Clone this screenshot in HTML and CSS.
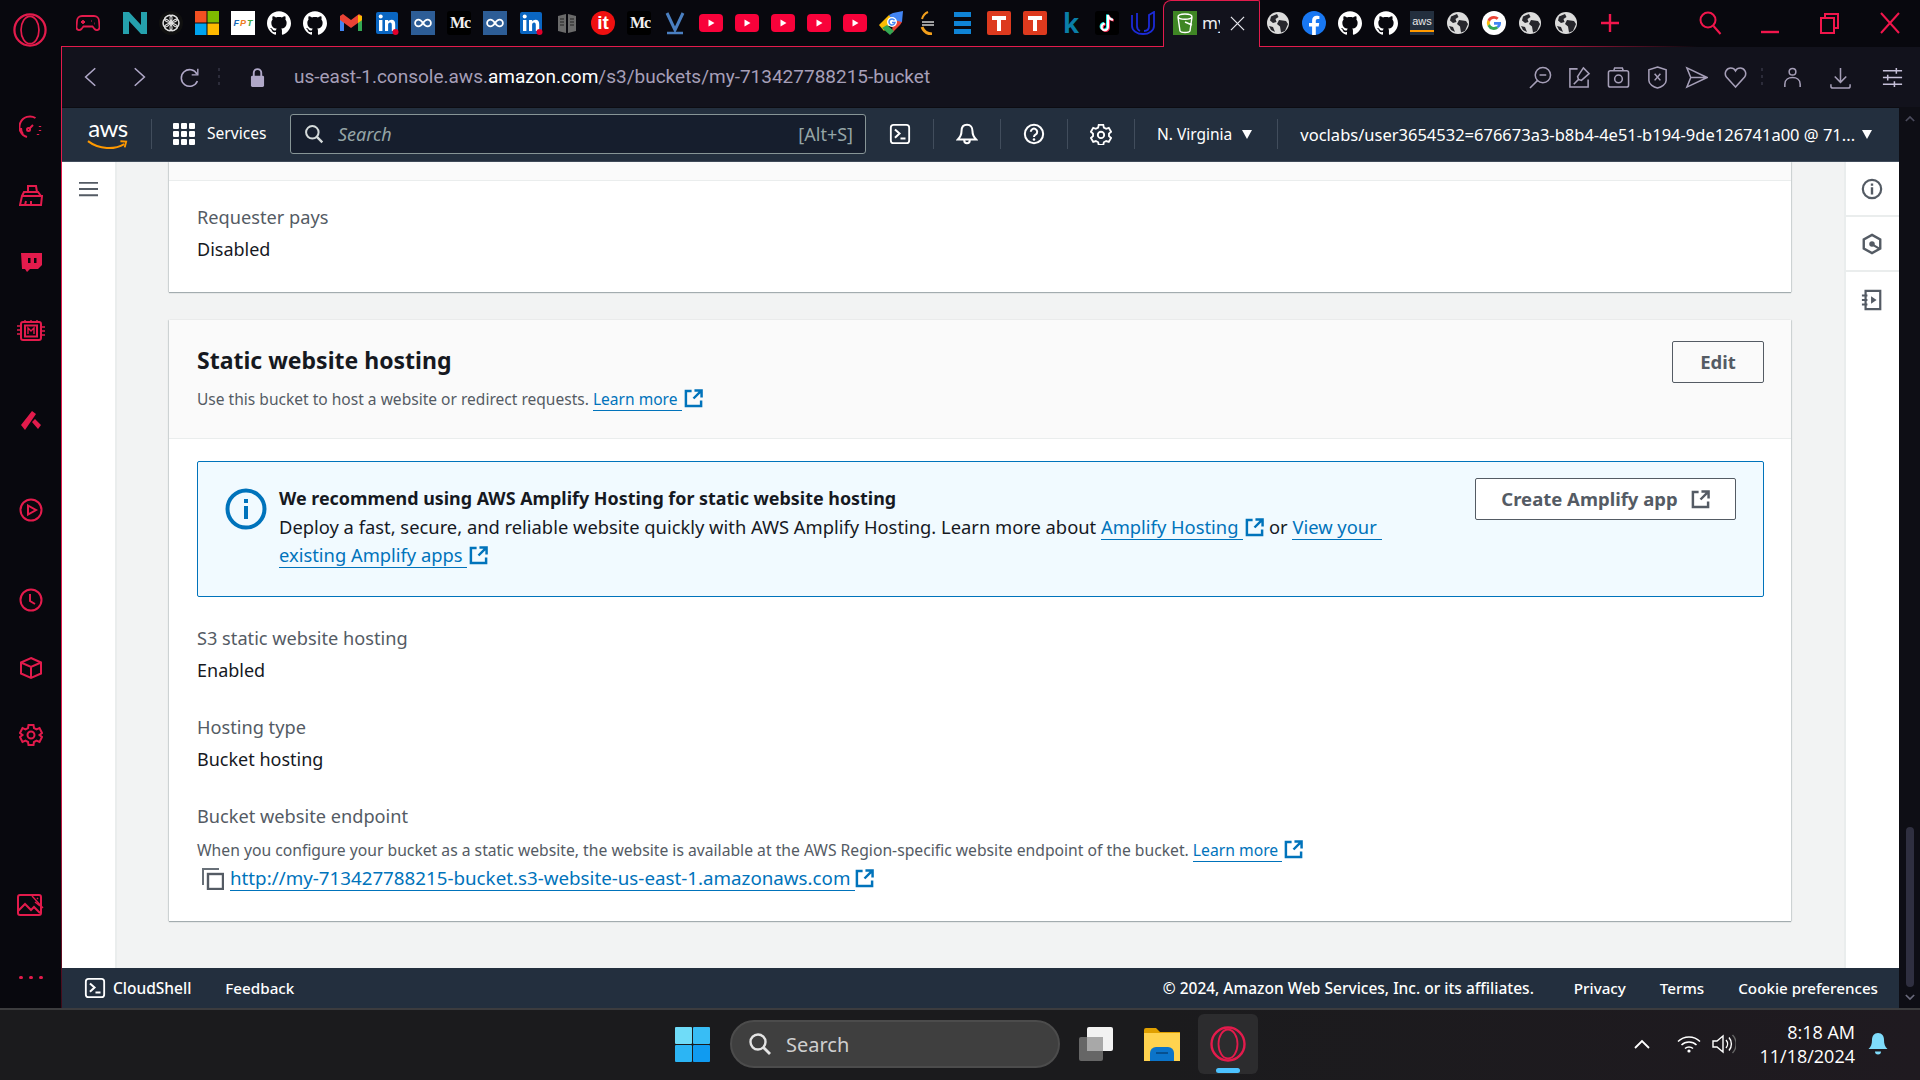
FILE: index.html
```html
<!DOCTYPE html>
<html lang="en">
<head>
<meta charset="utf-8">
<title>my-713427788215-bucket</title>
<link rel="stylesheet" href="styles.css">
</head>
<body>
<svg class="defs" aria-hidden="true">
  <defs>
    <symbol id="gh" viewBox="0 0 24 24"><path fill="#fff" d="M12 .297c-6.63 0-12 5.373-12 12 0 5.303 3.438 9.8 8.205 11.385.6.113.82-.258.82-.577 0-.285-.01-1.04-.015-2.04-3.338.724-4.042-1.61-4.042-1.61C4.422 18.07 3.633 17.7 3.633 17.7c-1.087-.744.084-.729.084-.729 1.205.084 1.838 1.236 1.838 1.236 1.07 1.835 2.809 1.305 3.495.998.108-.776.417-1.305.76-1.605-2.665-.3-5.466-1.332-5.466-5.93 0-1.31.465-2.38 1.235-3.22-.135-.303-.54-1.523.105-3.176 0 0 1.005-.322 3.3 1.23.96-.267 1.98-.399 3-.405 1.02.006 2.04.138 3 .405 2.28-1.552 3.285-1.23 3.285-1.23.645 1.653.24 2.873.12 3.176.765.84 1.23 1.91 1.23 3.22 0 4.61-2.805 5.625-5.475 5.92.42.36.81 1.096.81 2.22 0 1.606-.015 2.896-.015 3.286 0 .315.21.69.825.57C20.565 22.092 24 17.592 24 12.297c0-6.627-5.373-12-12-12"/></symbol>
    <symbol id="yt" viewBox="0 0 24 24"><rect x="0" y="3" width="24" height="18" rx="4" fill="#f8023a"/><path d="M9.5 8.5l6 3.5-6 3.5z" fill="#fff"/></symbol>
    <symbol id="li" viewBox="0 0 24 24"><rect x="1" y="1" width="22" height="22" rx="2" fill="#0a66c2"/><rect x="4" y="9" width="3.4" height="11" fill="#fff"/><circle cx="5.7" cy="5.6" r="2" fill="#fff"/><path d="M10 9h3.2v1.6c.7-1.2 1.9-1.9 3.3-1.9 2.7 0 3.7 1.7 3.7 4.5V20h-3.4v-6c0-1.5-.4-2.4-1.7-2.4s-2 1-2 2.4v6H10z" fill="#fff"/><circle cx="20.5" cy="21" r="3" fill="#e3002b"/></symbol>
    <symbol id="co" viewBox="0 0 24 24"><rect width="24" height="24" fill="#2d5d96"/><path d="M12 12c-1.6-2.4-2.8-3.4-4.5-3.4a3.4 3.4 0 0 0 0 6.8c1.7 0 2.9-1 4.5-3.4s2.8-3.4 4.5-3.4a3.4 3.4 0 0 1 0 6.8c-1.7 0-2.9-1-4.5-3.4z" fill="none" stroke="#fff" stroke-width="1.8"/></symbol>
    <symbol id="globe" viewBox="0 0 24 24"><circle cx="12" cy="12" r="11" fill="#dcdcdc"/><path d="M5 5.5l6-2.5 1.500 3-3 2 1 3-3.500 1-3-2.500zM13 9l7 1 2 3-3 7-4 1.500-1-6-3-2.500zM3 15l4 1 2 5-4-2z" fill="#26262c"/></symbol>
    <symbol id="t" viewBox="0 0 24 24"><rect width="24" height="24" rx="2" fill="#dd3a1e"/><path d="M5 5h14v4h-5v11h-4V9H5z" fill="#fff"/></symbol>
    <symbol id="ext" viewBox="0 0 20 20"><path d="M8 2H2v16h16v-6" fill="none" stroke="currentColor" stroke-width="2.6"/><path d="M11 1.500h7.500V9M18 2l-8 8" fill="none" stroke="currentColor" stroke-width="2.6"/></symbol>
    <symbol id="opera" viewBox="0 0 36 36"><circle cx="18" cy="18" r="16.500" fill="none" stroke="currentColor" stroke-width="2.4"/><ellipse cx="18" cy="18" rx="9.500" ry="14.500" fill="none" stroke="currentColor" stroke-width="1.800"/></symbol>
    <symbol id="term" viewBox="0 0 24 24"><rect x="2" y="2" width="20" height="20" rx="3" fill="none" stroke="currentColor" stroke-width="2"/><path d="M6.500 7l5 4.500-5 4.500M12.500 17h5.500" fill="none" stroke="currentColor" stroke-width="2.200"/></symbol>
    <symbol id="search" viewBox="0 0 24 24"><circle cx="10" cy="10" r="7.500" fill="none" stroke="currentColor" stroke-width="2.400"/><path d="M15.500 15.500L22 22" stroke="currentColor" stroke-width="2.800"/></symbol>
  </defs>
</svg>

<div class="window">
  <aside class="sidebar">
    <svg class="side-logo"><use href="#opera"/></svg>
    <div class="side-list">
      <span class="side-slot s1"><svg viewBox="0 0 24 24" class="side-ic"><path d="M16.500 3A10.500 10.500 0 1 0 8 22M4 19a10 10 0 0 1-2-6"/><path d="M10 14l4-4"/><circle cx="9.500" cy="14.500" r="1.500"/><path d="M21 11v1M21 15v1M19 19v1" stroke-width="2.400"/></svg></span>
      <span class="side-slot s2"><svg viewBox="0 0 24 24" class="side-ic"><path d="M3 12h20l-1 9H1zM3 12l2-4h14l3 4M9 8V2h8l1 6M7 17l-1 4M12 17v4"/></svg></span>
      <span class="side-slot s3"><svg viewBox="0 0 24 24" class="side-ic"><path class="fill" fill-rule="evenodd" d="M2 3h21v12l-4 4h-8l-3 3-2-3H3zm7 5v5h2.500V8zm6 0v5h2.500V8z"/></svg></span>
      <span class="side-slot s4"><svg viewBox="0 0 32 24" class="side-ic wide"><rect x="6" y="3" width="20" height="18" rx="2"/><rect x="10" y="6.500" width="12" height="11"/><path d="M13 15V9l3 3 3-3v6M2 7h4M2 11h4M2 15h4M26 8h4M26 12h4M26 16h4M10 1v2M16 1v2M22 1v2" stroke-width="1.400"/></svg></span>
      <span class="side-slot s5"><svg viewBox="0 0 24 24" class="side-ic"><path class="fill" d="M2 17L13 3l4 3L6 22zM13 14l3-3 6 6-3 4z"/></svg></span>
      <span class="side-slot s6"><svg viewBox="0 0 24 24" class="side-ic"><circle cx="12" cy="12" r="10.500"/><path d="M9 7.500l8 4.500-8 4.500z"/></svg></span>
      <span class="side-slot s7"><svg viewBox="0 0 24 24" class="side-ic"><circle cx="12" cy="12" r="10.500"/><path d="M11 6v7l5 3"/></svg></span>
      <span class="side-slot s8"><svg viewBox="0 0 24 24" class="side-ic"><path d="M12 2l10 4.500v11L12 22 2 17.500v-11zM2 6.500L12 11l10-4.500M12 11v11"/></svg></span>
      <span class="side-slot s9"><svg viewBox="0 0 24 24" class="side-ic"><path d="M9.500 2h5l.5 3 2.500 1.300L20.500 5 23 10l-2.500 2 2.500 2-2.500 5-3-1.300L15 19l-.5 3h-5L9 19l-2.500-1.300-3 1.300L1 14l2.500-2L1 10l2.500-5 3 1.300L9 5z"/><circle cx="12" cy="12" r="3.500"/></svg></span>
      <span class="side-slot s10"><svg viewBox="0 0 28 24" class="side-ic img"><rect x="1" y="2" width="23" height="20" rx="2"/><path d="M1 18l7-7 6 6 3-3 6 6"/><path d="M15 3l11 12M20 5l1 1M18 9l5 4" stroke-width="1.400"/></svg></span>
      <span class="side-slot s11"><span class="dot"></span><span class="dot"></span><span class="dot"></span></span>
    </div>
  </aside>

  <div class="main">
    <div class="tabstrip">
      <svg class="tb first" viewBox="0 0 24 24"><path d="M6 5h12a5 5 0 0 1 5 5l.5 6c.2 3-3 4-5 2l-2-2.500H7.500L5.500 18c-2 2-5.200 1-5-2L1 10a5 5 0 0 1 5-5zM5 11h4M7 9v4M15 10h.5M18 12.500h.5" fill="none" stroke="#e31b4c" stroke-width="1.800"/></svg>
      <svg class="tb" viewBox="0 0 24 24"><path d="M0 1h6l12 13V1h6v22h-6L6 10v13H0z" fill="#25a1ad"/></svg>
      <svg class="tb" viewBox="0 0 24 24"><circle cx="12" cy="12" r="12" fill="#101010"/><g fill="none" stroke="#e0e0e0" stroke-width="1.100"><ellipse cx="12" cy="8" rx="6.500" ry="3.600"/><ellipse cx="12" cy="8" rx="6.500" ry="3.600" transform="rotate(60 12 12)"/><ellipse cx="12" cy="8" rx="6.500" ry="3.600" transform="rotate(120 12 12)"/><ellipse cx="12" cy="8" rx="6.500" ry="3.600" transform="rotate(180 12 12)"/><ellipse cx="12" cy="8" rx="6.500" ry="3.600" transform="rotate(240 12 12)"/><ellipse cx="12" cy="8" rx="6.500" ry="3.600" transform="rotate(300 12 12)"/></g></svg>
      <svg class="tb" viewBox="0 0 24 24"><rect width="11.500" height="11.500" fill="#f25022"/><rect x="12.500" width="11.500" height="11.500" fill="#7fba00"/><rect y="12.500" width="11.500" height="11.500" fill="#00a4ef"/><rect x="12.500" y="12.500" width="11.500" height="11.500" fill="#ffb900"/></svg>
      <span class="tb fpt"><span class="fpt-f">F</span><span class="fpt-p">P</span><span class="fpt-t">T</span></span>
      <svg class="tb"><use href="#gh"/></svg>
      <svg class="tb"><use href="#gh"/></svg>
      <svg class="tb" viewBox="0 0 24 24"><path d="M1 5v15h4V10z" fill="#4285f4"/><path d="M23 5v15h-4V10z" fill="#34a853"/><path d="M1 5l3-2 8 6 8-6 3 2v4l-11 8L1 9z" fill="#ea4335"/><path d="M19 4l4 1v4l-4 3z" fill="#fbbc04"/></svg>
      <svg class="tb"><use href="#li"/></svg>
      <svg class="tb"><use href="#co"/></svg>
      <span class="tb med">Mc</span>
      <svg class="tb"><use href="#co"/></svg>
      <svg class="tb"><use href="#li"/></svg>
      <svg class="tb" viewBox="0 0 24 24"><path d="M3 5l8-2v19l-8-2zM21 5l-8-2v19l8-2z" fill="#6a6a6a"/><path d="M5 8h4M5 11h4M5 14h4M15 8h4M15 11h4M15 14h4" stroke="#222" stroke-width="1"/></svg>
      <span class="tb itc">it</span>
      <span class="tb med">Mc</span>
      <svg class="tb" viewBox="0 0 24 24"><path d="M4 2l8 17 8-17" fill="none" stroke="#4a7fc1" stroke-width="3"/><path d="M4 22h16" stroke="#4a7fc1" stroke-width="2.500"/></svg>
      <svg class="tb"><use href="#yt"/></svg>
      <svg class="tb"><use href="#yt"/></svg>
      <svg class="tb"><use href="#yt"/></svg>
      <svg class="tb"><use href="#yt"/></svg>
      <svg class="tb"><use href="#yt"/></svg>
      <svg class="tb" viewBox="0 0 24 24"><path d="M0 14L10 4l5 5L5 20z" fill="#fbbc04"/><path d="M10 4l4-2 10-2-1 11-6 2z" fill="#4285f4"/><path d="M14 9l9 2-2 3-8 8z" fill="#ea4335"/><path d="M3 17l8 7 4-4-7-6z" fill="#34a853"/><circle cx="13" cy="11" r="5" fill="#fff"/><path d="M15.500 9.300A3 3 0 1 0 16 11.500h-3" fill="none" stroke="#4285f4" stroke-width="1.500"/></svg>
      <svg class="tb" viewBox="0 0 24 24"><path d="M13 1A11 11 0 0 0 7 8" fill="none" stroke="#f29f1c" stroke-width="2"/><path d="M7 16a11 11 0 0 0 10 7" fill="none" stroke="#f29f1c" stroke-width="3"/><path d="M7 11h12M7 14h12" stroke="#cfcfcf" stroke-width="1.500"/></svg>
      <svg class="tb" viewBox="0 0 24 24"><rect x="3" y="1" width="17" height="5" fill="#0f84d6"/><rect x="3" y="10" width="17" height="5" fill="#0f84d6"/><rect x="3" y="18" width="17" height="5" fill="#0f84d6"/></svg>
      <svg class="tb"><use href="#t"/></svg>
      <svg class="tb"><use href="#t"/></svg>
      <span class="tb kk">k</span>
      <svg class="tb" viewBox="0 0 24 24"><rect width="24" height="24" rx="3" fill="#000"/><path d="M13 4v12a3.200 3.200 0 1 1-3.200-3.200M13 4c.4 2.800 2.200 4.400 5 4.700" fill="none" stroke="#25f4ee" stroke-width="2.400" transform="translate(-.8 -.6)"/><path d="M13 4v12a3.200 3.200 0 1 1-3.200-3.200M13 4c.4 2.800 2.200 4.400 5 4.700" fill="none" stroke="#fe2c55" stroke-width="2.400" transform="translate(.8 .6)"/><path d="M13 4v12a3.200 3.200 0 1 1-3.200-3.200M13 4c.4 2.800 2.200 4.400 5 4.700" fill="none" stroke="#fff" stroke-width="2"/></svg>
      <svg class="tb" viewBox="0 0 24 24"><path d="M1 4v11a11 8 0 0 0 22 0V1l-5 3v11c0 3-2 5-5 5M6 2v13c0 2 1 4 3 5" fill="none" stroke="#1c2bd8" stroke-width="1.800"/></svg>

      <div class="tab">
        <svg class="tab-fav" viewBox="0 0 24 24"><rect width="24" height="24" fill="#3f8624"/><path d="M5 6c0-4 14-4 14 0l-2 14c-1 2-9 2-10 0zM5 6c1 3 13 3 14 0M12 11l7 3" fill="none" stroke="#fff" stroke-width="1.400"/></svg>
        <span class="tab-title">my-</span>
        <svg class="tab-close" viewBox="0 0 16 16"><path d="M1 1l14 14M15 1L1 15" stroke="#e8e8ee" stroke-width="1.300"/></svg>
      </div>

      <svg class="tb"><use href="#globe"/></svg>
      <svg class="tb" viewBox="0 0 24 24"><circle cx="12" cy="12" r="12" fill="#1877f2"/><path d="M16.700 15.500l.5-3.500h-3.400V9.800c0-1 .5-1.900 2-1.900h1.600V5s-1.400-.3-2.700-.3c-2.800 0-4.600 1.700-4.600 4.700V12H7v3.500h3.100V24h3.700v-8.500z" fill="#fff"/></svg>
      <svg class="tb"><use href="#gh"/></svg>
      <svg class="tb"><use href="#gh"/></svg>
      <span class="tb awsf">aws</span>
      <svg class="tb"><use href="#globe"/></svg>
      <svg class="tb" viewBox="0 0 24 24"><circle cx="12" cy="12" r="12" fill="#fff"/><path d="M12 5a7 7 0 0 1 4.700 1.800l-2 2A4.200 4.200 0 0 0 7.900 11L5.500 9A7 7 0 0 1 12 5z" fill="#ea4335"/><path d="M5.500 9l2.400 2a4.300 4.300 0 0 0 0 2.100l-2.400 2a7 7 0 0 1 0-6.100z" fill="#fbbc04"/><path d="M7.900 13.100a4.200 4.200 0 0 0 6.300 2.200l2.300 1.800A7 7 0 0 1 5.500 15z" fill="#34a853"/><path d="M19 11h-7v2.800h4a3.500 3.500 0 0 1-1.800 1.500l2.300 1.800A7 7 0 0 0 19 11z" fill="#4285f4"/></svg>
      <svg class="tb"><use href="#globe"/></svg>
      <svg class="tb"><use href="#globe"/></svg>
      <svg class="tb plus" viewBox="0 0 24 24"><path d="M12 3v18M3 12h18" stroke="#f1164c" stroke-width="2.400"/></svg>

      <div class="winctl">
        <span class="wc"><svg viewBox="0 0 24 24"><circle cx="10" cy="9" r="7.500"/><path d="M15.500 15l7 8"/></svg></span>
        <span class="wc"><svg viewBox="0 0 24 24"><path d="M3 21h18" stroke-width="2.400"/></svg></span>
        <span class="wc"><svg viewBox="0 0 24 24"><rect x="3" y="7" width="13" height="15"/><path d="M7 7V3h13v14h-4"/></svg></span>
        <span class="wc"><svg viewBox="0 0 24 24"><path d="M3 2l18 20M21 2L3 22"/></svg></span>
      </div>
    </div>

    <div class="frame">
      <div class="addressbar">
        <svg class="nav back" viewBox="0 0 16 24"><path d="M14 2L3 12l11 10"/></svg>
        <svg class="nav fwd" viewBox="0 0 16 24"><path d="M2 2l11 10L2 22"/></svg>
        <svg class="nav reload" viewBox="0 0 24 24"><path d="M20.500 8A9.500 9.500 0 1 0 21 16"/><path d="M21.500 2v7h-7" stroke-width="1.600"/></svg>
        <span class="vdots"></span>
        <svg class="lock" viewBox="0 0 16 22"><path d="M4 10V6a4 4 0 0 1 8 0v4" fill="none" stroke="#b0a8c8" stroke-width="2"/><rect x="1" y="9" width="14" height="12" rx="1.500" fill="#b0a8c8"/></svg>
        <span class="url">us-east-1.console.aws.<b>amazon.com</b>/s3/buckets/my-713427788215-bucket</span>
        <div class="addr-tools">
          <svg viewBox="0 0 24 24"><circle cx="14.500" cy="9.500" r="8"/><path d="M9 15l-8 8M11 9.500h7"/></svg>
          <svg viewBox="0 0 24 24"><path d="M10 3H2v19h19v-8"/><path d="M16 2l6 6-8 7-3-1-1-3zM11 14l-5 5"/></svg>
          <svg viewBox="0 0 24 24"><rect x="1.500" y="5" width="21" height="17" rx="2"/><path d="M7 5l1-3h8l1 3"/><circle cx="12" cy="13.500" r="4"/></svg>
          <svg viewBox="0 0 24 24"><path d="M12 1l9 3v11c0 4-5 7-9 8-4-1-9-4-9-8V4zM9 8l6 7M15 8l-6 7"/></svg>
          <svg viewBox="0 0 24 24"><path d="M2 2l21 10L2 22l4-10zM6 12h17"/></svg>
          <svg viewBox="0 0 24 24"><path d="M12 22L2.500 11.500C-.5 7 3 2 7 2c2 0 4 1 5 3 1-2 3-3 5-3 4 0 7.500 5 4.500 9.500z"/></svg>
          <span class="vdots tool-dots"></span>
          <svg class="t-person" viewBox="0 0 24 24"><circle cx="12" cy="6" r="3.500"/><path d="M4 22v-3c0-5 4-7 8-7s8 2 8 7v3"/></svg>
          <svg class="t-dl" viewBox="0 0 24 24"><path d="M12 2v14M6 11l6 6 6-6M2 19v2c0 1 1 2 2 2h16c1 0 2-1 2-2v-2"/></svg>
          <svg class="t-sl" viewBox="0 0 24 24"><path d="M2 5h20M2 12h20M2 19h20M16 2v6M7 9v6M14 16v6"/></svg>
        </div>
      </div>

      <div class="viewport">
        <div class="page">
          <header class="awsbar">
            <div class="aws-logo">
              <span class="aws-word">aws</span>
              <svg viewBox="0 0 44 12"><path d="M1 2c12 9 28 9 38 3" fill="none" stroke="#f90" stroke-width="2.200"/><path d="M35 2l6 .5-1.500 6" fill="none" stroke="#f90" stroke-width="2"/></svg>
            </div>
            <span class="hdiv logo-div"></span>
            <svg class="grid9" viewBox="0 0 22 22"><g fill="#fff"><rect width="6" height="6" rx="1"/><rect x="8" width="6" height="6" rx="1"/><rect x="16" width="6" height="6" rx="1"/><rect y="8" width="6" height="6" rx="1"/><rect x="8" y="8" width="6" height="6" rx="1"/><rect x="16" y="8" width="6" height="6" rx="1"/><rect y="16" width="6" height="6" rx="1"/><rect x="8" y="16" width="6" height="6" rx="1"/><rect x="16" y="16" width="6" height="6" rx="1"/></g></svg>
            <span class="services">Services</span>
            <div class="searchbox">
              <svg><use href="#search"/></svg>
              <span class="sb-text">Search</span>
              <span class="sb-key">[Alt+S]</span>
            </div>
            <span class="hbtn first-btn"><svg><use href="#term"/></svg></span>
            <span class="hdiv"></span>
            <span class="hbtn"><svg viewBox="0 0 24 24"><path d="M12 2c-4 0-6 3-6 7 0 4-2 7-4 9h20c-2-2-4-5-4-9 0-4-2-7-6-7zM9 19a3 3 0 0 0 6 0" fill="none" stroke="#fff" stroke-width="2.200"/></svg></span>
            <span class="hdiv"></span>
            <span class="hbtn"><svg viewBox="0 0 24 24"><circle cx="12" cy="12" r="10" fill="none" stroke="#fff" stroke-width="2.200"/><path d="M8.500 9.500a3.500 3.500 0 1 1 5.500 3c-1.300.8-2 1.500-2 2.700" fill="none" stroke="#fff" stroke-width="2.200"/><circle cx="12" cy="18" r="1.400" fill="#fff"/></svg></span>
            <span class="hdiv"></span>
            <span class="hbtn"><svg viewBox="0 0 24 24"><path d="M9.500 2h5l.6 3 2.500 1.300 2.900-1 2.500 4.300-2.300 2 0 2.800 2.300 2-2.500 4.300-2.900-1-2.500 1.300-.6 3h-5l-.6-3-2.500-1.300-2.900 1L1 16.400l2.300-2v-2.800L1 9.600l2.500-4.300 2.900 1L8.900 5z" fill="none" stroke="#fff" stroke-width="2"/><circle cx="12" cy="13" r="3.500" fill="none" stroke="#fff" stroke-width="2"/></svg></span>
            <span class="hdiv"></span>
            <span class="region">N. Virginia</span><span class="caret region-caret"></span>
            <span class="hdiv account-div"></span>
            <span class="account">voclabs/user3654532=676673a3-b8b4-4e51-b194-9de126741a00 @ 71...</span><span class="caret"></span>
          </header>

          <div class="content-row">
            <div class="sidecol">
              <svg class="burger" viewBox="0 0 20 16"><path d="M0 1.500h20M0 8h20M0 14.500h20" stroke="#545b64" stroke-width="2"/></svg>
            </div>
            <main class="content">
              <section class="card card-top">
                <div class="strip"></div>
                <div class="card-body tail">
                  <div class="label">Requester pays</div>
                  <div class="value">Disabled</div>
                </div>
              </section>

              <section class="card">
                <div class="card-head">
                  <div>
                    <h2>Static website hosting</h2>
                    <p class="desc">Use this bucket to host a website or redirect requests. <a href="#">Learn more </a><svg class="ext"><use href="#ext"/></svg></p>
                  </div>
                  <button class="btn btn-edit">Edit</button>
                </div>
                <div class="card-body">
                  <div class="flash">
                    <svg class="flash-ic" viewBox="0 0 42 42"><circle cx="21" cy="21" r="18.500" fill="none" stroke="#0073bb" stroke-width="4"/><rect x="19" y="18" width="4" height="13" fill="#0073bb"/><rect x="19" y="11" width="4" height="4" fill="#0073bb"/></svg>
                    <div class="flash-text">
                      <strong>We recommend using AWS Amplify Hosting for static website hosting</strong><br>
                      Deploy a fast, secure, and reliable website quickly with AWS Amplify Hosting. Learn more about <a href="#">Amplify Hosting </a><svg class="ext"><use href="#ext"/></svg> or <a href="#">View your existing Amplify apps </a><svg class="ext"><use href="#ext"/></svg>
                    </div>
                    <button class="btn btn-amp">Create Amplify app<svg class="ext"><use href="#ext"/></svg></button>
                  </div>
                  <div class="label l-first">S3 static website hosting</div>
                  <div class="value">Enabled</div>
                  <div class="label l-next">Hosting type</div>
                  <div class="value">Bucket hosting</div>
                  <div class="label l-next">Bucket website endpoint</div>
                  <p class="small">When you configure your bucket as a static website, the website is available at the AWS Region-specific website endpoint of the bucket. <a href="#">Learn more </a><svg class="ext"><use href="#ext"/></svg></p>
                  <div class="endpoint">
                    <svg class="copy" viewBox="0 0 22 22"><path d="M1 17V1h16" fill="none" stroke="#687078" stroke-width="2"/><rect x="6" y="6" width="15" height="15" fill="none" stroke="#545b64" stroke-width="2.400"/></svg>
                    <a href="#">http://my-713427788215-bucket.s3-website-us-east-1.amazonaws.com </a><svg class="ext"><use href="#ext"/></svg>
                  </div>
                </div>
              </section>
            </main>
            <aside class="rail">
              <span class="rail-btn"><svg viewBox="0 0 24 24"><circle cx="12" cy="12" r="10" fill="none" stroke="#545b64" stroke-width="2.400"/><path d="M12 10v8M12 6v2.500" stroke="#545b64" stroke-width="2.600"/></svg></span>
              <span class="rail-btn"><svg viewBox="0 0 24 24"><path d="M12 2l9 5v10l-9 5-9-5V7z" fill="none" stroke="#545b64" stroke-width="2.600"/><circle cx="12" cy="12" r="3" fill="#545b64"/><path d="M13 13l7 4" stroke="#545b64" stroke-width="2.400"/></svg></span>
              <span class="rail-btn"><svg viewBox="0 0 24 24"><path d="M5 2h16v20H5z" fill="none" stroke="#545b64" stroke-width="2.400"/><path d="M1 7h6M1 12h6M1 17h6" stroke="#545b64" stroke-width="2.200"/><path d="M11 8l6 4-6 4z" fill="#545b64"/></svg></span>
            </aside>
          </div>

          <footer class="awsfoot">
            <svg class="foot-term"><use href="#term"/></svg>
            <span class="f-cloud">CloudShell</span>
            <span class="f-feedback">Feedback</span>
            <span class="f-copy">© 2024, Amazon Web Services, Inc. or its affiliates.</span>
            <span class="f-link f-privacy">Privacy</span>
            <span class="f-link">Terms</span>
            <span class="f-link">Cookie preferences</span>
          </footer>
        </div>
        <div class="scrollbar">
          <svg class="sb-arrow" viewBox="0 0 12 8"><path d="M1 7l5-5 5 5" fill="none" stroke="#4b4b5c" stroke-width="2"/></svg>
          <div class="sb-thumb"></div>
          <svg class="sb-arrow" viewBox="0 0 12 8"><path d="M1 1l5 5 5-5" fill="none" stroke="#6a6a7c" stroke-width="2"/></svg>
        </div>
      </div>
    </div>
  </div>
</div>

<footer class="taskbar">
  <svg class="win" viewBox="0 0 35 35"><rect width="17" height="17" rx="1" fill="#6fdcf8"/><rect x="18" width="17" height="17" rx="1" fill="#38bdf5"/><rect y="18" width="17" height="17" rx="1" fill="#2cb5f4"/><rect x="18" y="18" width="17" height="17" rx="1" fill="#109bf0"/></svg>
  <div class="tsearch"><svg><use href="#search"/></svg><span>Search</span></div>
  <svg class="taskview" viewBox="0 0 36 36"><rect x="1" y="11" width="24" height="24" rx="2" fill="#666"/><rect x="9" y="1" width="26" height="24" rx="2" fill="#f2f2f2"/><rect x="9" y="11" width="16" height="14" fill="#a8a8a8"/></svg>
  <svg class="explorer" viewBox="0 0 36 34"><path d="M0 3a2 2 0 0 1 2-2h10l4 4h20v4H0z" fill="#e0a000"/><path d="M0 6h36v28H0z" fill="#ffd34f"/><path d="M6 26a6 6 0 0 1 6-6h12a6 6 0 0 1 6 6v8H6z" fill="#0b74c9"/><path d="M12 26h12" stroke="#06508f" stroke-width="2"/></svg>
  <div class="opera-tile"><svg><use href="#opera"/></svg><span class="run-ind"></span></div>
  <div class="tray">
    <svg class="chev" viewBox="0 0 16 10"><path d="M1 9l7-7 7 7" fill="none" stroke="#fff" stroke-width="1.800"/></svg>
    <svg class="wifi" viewBox="0 0 24 18"><path d="M1 6.500c6-6 16-6 22 0M4.500 10c4-4 11-4 15 0M8 13.500c2.200-2 5.800-2 8 0" fill="none" stroke="#fff" stroke-width="1.500"/><circle cx="12" cy="16" r="1.600" fill="#fff"/></svg>
    <svg class="vol" viewBox="0 0 24 20"><path d="M1 7h4l6-5v16l-6-5H1z" fill="none" stroke="#fff" stroke-width="1.400"/><path d="M14 6a6 6 0 0 1 0 8M17 3.500a10 10 0 0 1 0 13" fill="none" stroke="#fff" stroke-width="1.400"/><path d="M20.500 1a13 13 0 0 1 0 18" fill="none" stroke="#666" stroke-width="1.400"/></svg>
    <div class="clock"><span>8:18 AM</span><span>11/18/2024</span></div>
    <svg class="tbell" viewBox="0 0 20 24"><path d="M10 1c-4 0-6 3-6 7 0 4-1 7-3.500 9h19C17 15 16 12 16 8c0-4-2-7-6-7z" fill="#7fdcfb"/><path d="M7 19.500h6a3 3 0 0 1-6 0z" fill="#7fdcfb"/></svg>
  </div>
</footer>
</body>
</html>
```
FILE: styles.css
```css
* { box-sizing: border-box; }
html, body { margin: 0; height: 100%; overflow: hidden; }
body { width: 1920px; height: 1080px; background: #08080e; font-family: "Noto Sans", "Liberation Sans", sans-serif; color: #16191f; display: flex; flex-direction: column; }
.defs { position: absolute; width: 0; height: 0; }
svg { display: block; flex: none; }
a { color: #0073bb; text-decoration: none; border-bottom: 1px solid #0073bb; white-space: pre-wrap; }

.window { display: flex; height: 1008px; flex: none; }

/* Browser sidebar */
.sidebar { width: 61px; flex: none; background: #08080e; display: flex; flex-direction: column; align-items: center; color: #e31b4c; }
.side-logo { width: 34px; height: 34px; margin-top: 13px; margin-right: 1px; }
.side-list { display: flex; flex-direction: column; align-items: center; width: 100%; margin-top: 65px; }
.side-slot { height: 30px; display: flex; gap: 6px; align-items: center; justify-content: center; flex: none; }
.s2 { margin-top: 39px; }
.s3 { margin-top: 36px; }
.s4 { margin-top: 39px; }
.s5 { margin-top: 59px; }
.s6 { margin-top: 60px; }
.s7 { margin-top: 60px; }
.s8 { margin-top: 38px; }
.s9 { margin-top: 37px; }
.s10 { margin-top: 140px; }
.s11 { margin-top: 42px; }
.side-ic { width: 24px; height: 24px; fill: none; stroke: #e31b4c; stroke-width: 2; }
.side-ic.wide { width: 32px; }
.side-ic.img { width: 28px; }
.side-ic .fill { fill: #e31b4c; stroke: none; }
.dot { width: 4px; height: 3px; border-radius: 2px; background: #e31b4c; }

.main { flex: 1; min-width: 0; display: flex; flex-direction: column; }

/* Tab strip */
.tabstrip { height: 47px; flex: none; display: flex; align-items: center; background: #08080e; border-bottom: 1px solid transparent; border-image: linear-gradient(90deg, #e31b4c 0, #e31b4c 78%, #08080e 88%) 1; position: relative; }
.tb { width: 24px; height: 24px; margin: 0 6px; flex: none; }
.tb.first { margin-left: 15px; margin-right: 17px; }
.tb.plus { margin-left: 14px; }
.fpt { background: #fff; font: italic 700 9px "Liberation Sans", sans-serif; display: flex; align-items: center; justify-content: center; gap: 1px; }
.fpt-f { color: #1467b5; }
.fpt-p { color: #f07a1e; }
.fpt-t { color: #3fa63f; }
.med { background: #000; border-radius: 3px; color: #f0f0f0; font: 700 16px/24px "Liberation Serif", serif; letter-spacing: -1px; overflow: hidden; padding-left: 3px; }
.itc { background: #ef1010; border-radius: 50%; color: #fff; font: 700 19px/24px "Liberation Sans", sans-serif; text-align: center; }
.kk { color: #0a7fa8; font: 700 26px/24px "Noto Sans", sans-serif; text-align: center; }
.awsf { background: #232f3e; color: #e8e8e8; font: 400 11px/20px "Liberation Sans", sans-serif; text-align: center; border-bottom: 3px solid #232f3e; box-shadow: inset 0 -4px 0 -2px #f90; }

.tab { width: 97px; height: 47px; margin-left: 2px; margin-bottom: -1px; padding: 10px 14px 0 9px; align-self: flex-start; background: #12121c; border: 1px solid #e31b4c; border-bottom: 0; border-top-left-radius: 8px; border-top-right-radius: 2px; display: flex; align-items: flex-start; gap: 5px; flex: none; }
.tab-fav { width: 24px; height: 24px; }
.tab-title { width: 20px; overflow: hidden; color: #eee; font: 400 17px/24px "Noto Sans", sans-serif; }
.tab-close { width: 15px; height: 15px; margin: 5px 0 0 5px; }

.winctl { margin-left: auto; display: flex; }
.wc { width: 60px; display: flex; justify-content: center; }
.wc svg { width: 24px; height: 26px; fill: none; stroke: #f1164c; stroke-width: 2; }

/* Frame */
.frame { flex: 1; min-height: 0; display: flex; flex-direction: column; border-left: 1px solid transparent; border-image: linear-gradient(#e31b4c 0, #e31b4c 75%, #3b0b18 100%) 1; }
.addressbar { height: 60px; flex: none; background: #12121c; display: flex; align-items: center; }
.nav { fill: none; stroke: #b0a8c8; stroke-width: 1.800; }
.nav.back { width: 14px; height: 22px; margin-left: 21px; }
.nav.fwd { width: 14px; height: 22px; margin-left: 36px; }
.nav.reload { width: 21px; height: 21px; margin-left: 32px; }
.vdots { width: 2px; height: 18px; margin-left: 18px; background: repeating-linear-gradient(#2c2c3a 0 3px, transparent 3px 7px); }
.lock { width: 15px; height: 21px; margin-left: 30px; }
.url { margin-left: 29px; color: #a69fb8; font: 400 19px/28px "Roboto", sans-serif; white-space: nowrap; }
.url b { font-weight: 400; color: #fff; }
.addr-tools { margin-left: auto; margin-right: 16px; display: flex; align-items: center; gap: 16px; }
.addr-tools svg { width: 23px; height: 23px; fill: none; stroke: #a69fb8; stroke-width: 1.600; }
.tool-dots { margin: 0 -2px 0 -2px; }
.addr-tools .t-person { margin-left: 4px; }
.addr-tools .t-dl { margin-left: 9px; }
.addr-tools .t-sl { margin-left: 13px; stroke: #c5bfd8; }

.viewport { flex: 1; min-height: 0; display: flex; }
.page { flex: 1; min-width: 0; display: flex; flex-direction: column; }

/* AWS header */
.awsbar { height: 55px; flex: none; padding-bottom: 1px; background: #232f3e; border-bottom: 1px solid #414d5c; border-top: 1px solid #0c0c12; display: flex; align-items: center; color: #fff; font-size: 15.500px; white-space: nowrap; }
.aws-logo { width: 42px; margin-left: 25px; display: flex; flex-direction: column; align-items: center; }
.aws-word { font: 400 24px/20px "Lato", sans-serif; letter-spacing: -.5px; }
.aws-logo svg { width: 42px; height: 12px; margin-top: 1px; }
.hdiv { width: 1px; height: 30px; background: #414d5c; flex: none; }
.logo-div { margin-left: 22px; }
.grid9 { width: 22px; height: 22px; margin-left: 21px; }
.services { margin: 0 0 2px 12px; width: 60px; font-size: 15.600px; }
.searchbox { width: 576px; height: 40px; margin-left: 23px; border: 1px solid #879596; border-radius: 3px; background: #161e2d; display: flex; align-items: center; padding: 0 12px 0 13px; color: #95a5a6; font-size: 18px; }
.searchbox svg { width: 20px; height: 20px; color: #d5dbdb; }
.sb-text { margin-left: 14px; font-style: italic; }
.sb-key { margin-left: auto; }
.hbtn { width: 66px; display: flex; justify-content: center; flex: none; }
.hbtn svg { width: 22px; height: 22px; color: #fff; }
.first-btn { margin-left: 1px; }
.region { margin-left: 22px; }
.account { font-size: 16.500px; }
.caret { width: 0; height: 0; margin-left: 7px; border-left: 5.500px solid transparent; border-right: 5.500px solid transparent; border-top: 9px solid #fff; flex: none; }
.region-caret { margin-left: 10px; margin-right: 25px; }
.account-div { margin-right: 22px; }

/* Console body */
.content-row { flex: 1; min-height: 0; display: flex; background: #f2f3f3; }
.sidecol { width: 55px; flex: none; background: #fff; border-right: 2px solid #eaeded; padding: 19px 0 0 17px; }
.burger { width: 19px; height: 16px; }
.content { flex: 1; min-width: 0; padding: 0 53px 0 52px; display: flex; flex-direction: column; gap: 28px; }
.card { background: #fff; box-shadow: 0 1px 1px 0 rgba(0,28,36,.3), 1px 0 1px 0 rgba(0,28,36,.1), -1px 0 1px 0 rgba(0,28,36,.1); }
.strip { height: 19px; background: #fafafa; border-bottom: 1px solid #eaeded; }
.card-body { padding: 22px 27px 30px 28px; }
.card-body.tail { padding: 24px 28px 31px; }
.label { color: #545b64; font-size: 18.200px; line-height: 24px; }
.value { color: #16191f; font-size: 18px; line-height: 24px; margin-top: 8px; }
.l-first { margin-top: 29px; }
.l-next { margin-top: 33px; }
.card-head { height: 119px; background: #fafafa; border-bottom: 1px solid #eaeded; padding: 25px 27px 0 28px; display: flex; justify-content: space-between; align-items: flex-start; }
h2 { margin: 0; font-size: 23px; line-height: 30px; font-weight: 700; color: #16191f; }
.desc { margin: 12px 0 0; font-size: 15.550px; line-height: 24px; color: #545b64; }
.ext { display: inline-block; width: 19px; height: 19px; vertical-align: -3px; color: #0073bb; margin-left: 2px; }
.btn { background: #fff; border: 1px solid #545b64; border-radius: 2px; color: #545b64; font: 700 18.500px/24px "Noto Sans", sans-serif; display: flex; align-items: center; justify-content: center; }
.btn-edit { width: 92px; height: 42px; margin-top: -4px; background: transparent; }
.btn-amp { width: 261px; height: 42px; flex: none; margin: 16px 27px 0 0; }
.btn-amp .ext { color: #545b64; margin-left: 13px; }
.flash { height: 136px; background: #f1faff; border: 1px solid #0073bb; border-radius: 2px; display: flex; align-items: flex-start; }
.flash-ic { width: 42px; height: 42px; margin: 26px 0 0 27px; }
.flash-text { flex: 1; margin: 22px 70px 0 12px; font-size: 18.350px; line-height: 28.500px; color: #16191f; }
.flash-text strong { font-weight: 700; font-size: 17.900px; }
.small { margin: 10px 0 0; font-size: 15.700px; line-height: 24px; color: #545b64; }
.endpoint { display: flex; align-items: center; margin-top: 4px; font-size: 18.750px; line-height: 24px; padding-left: 5px; }
.endpoint .ext { margin-left: 0; }
.copy { width: 22px; height: 22px; margin-right: 6px; }

.rail { width: 55px; flex: none; background: #fff; border-left: 2px solid #eaeded; display: flex; flex-direction: column; }
.rail-btn { height: 55px; padding-right: 2px; border-bottom: 2px solid #eaeded; display: flex; align-items: center; justify-content: center; }
.rail-btn:last-child { border-bottom: 0; }
.rail-btn svg { width: 22px; height: 22px; }

.awsfoot { height: 40px; flex: none; padding-bottom: 1px; background: #232f3e; color: #fff; display: flex; align-items: center; font-size: 15.500px; font-weight: 500; white-space: nowrap; padding-right: 21px; }
.foot-term { width: 22px; height: 22px; margin-left: 22px; }
.f-cloud { margin-left: 7px; }
.f-feedback { margin-left: 34px; font-size: 15.200px; }
.f-copy { margin-left: auto; }
.f-link { margin-left: 34px; font-size: 15.200px; }
.f-privacy { margin-left: 40px; }

.scrollbar { width: 21px; flex: none; background: #0e0e15; display: flex; flex-direction: column; align-items: center; justify-content: space-between; padding: 8px 0 7px; position: relative; }
.sb-arrow { width: 10px; height: 7px; }
.sb-thumb { position: absolute; top: 720px; left: 7px; width: 8px; height: 160px; border-radius: 4px; background: #2f2f40; }

/* Taskbar */
.taskbar { height: 72px; flex: none; padding-bottom: 2px; background: linear-gradient(90deg, #1b1b1d 0, #1b1b1d 60%, #1f1a20 100%); border-top: 2px solid #3c3c3e; display: flex; align-items: center; position: relative; }
.win { width: 35px; height: 35px; margin-left: 675px; }
.tsearch { width: 330px; height: 48px; margin-left: 20px; border-radius: 24px; background: #3f3f3f; border: 2px solid #4c4c4c; display: flex; align-items: center; padding-left: 16px; color: #cfcfcf; font: 400 20px "Noto Sans", sans-serif; }
.tsearch svg { width: 24px; height: 24px; color: #e4e4e4; }
.tsearch span { margin-left: 14px; }
.taskview { width: 36px; height: 36px; margin-left: 18px; }
.explorer { width: 36px; height: 34px; margin-left: 30px; }
.opera-tile { width: 60px; height: 60px; margin-left: 18px; background: #2c2c2e; border-radius: 6px; display: flex; align-items: center; justify-content: center; position: relative; color: #e31b4c; }
.opera-tile svg { width: 36px; height: 36px; }
.run-ind { position: absolute; left: 18px; bottom: 1px; width: 24px; height: 5px; border-radius: 3px; background: #4cc2ff; }
.tray { margin-left: auto; display: flex; align-items: center; color: #fff; padding-right: 32px; }
.chev { width: 16px; height: 10px; }
.wifi { width: 24px; height: 18px; margin-left: 27px; }
.vol { width: 24px; height: 20px; margin-left: 11px; }
.clock { margin-left: 23px; width: 96px; display: flex; flex-direction: column; align-items: flex-end; font: 400 18px/24px "Open Sans", sans-serif; white-space: nowrap; }
.tbell { width: 20px; height: 24px; margin-left: 13px; }
```
